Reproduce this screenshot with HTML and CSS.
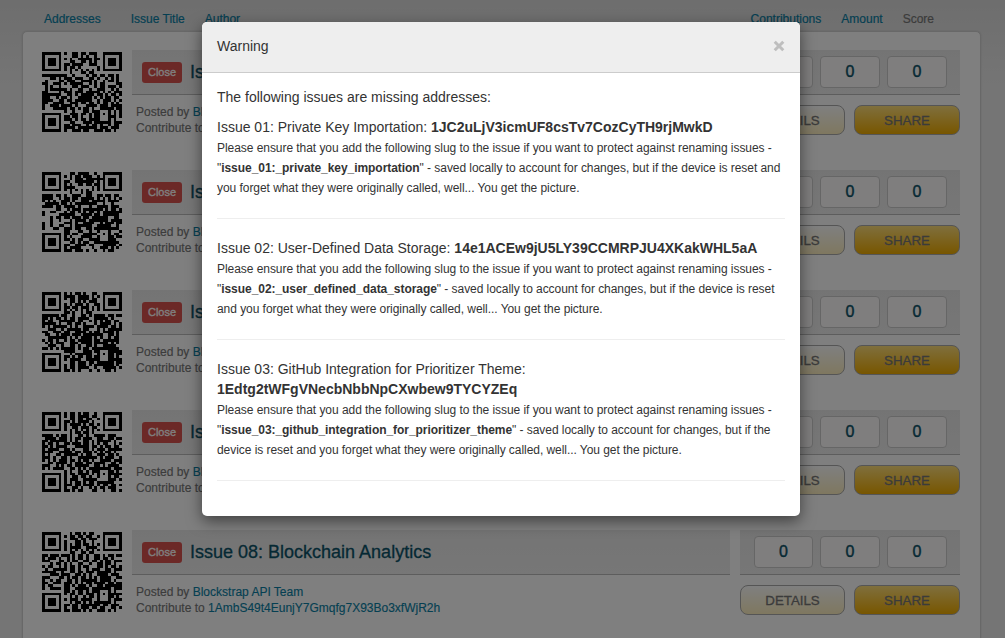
FILE: index.html
```html
<!DOCTYPE html>
<html lang="en">
<head>
<meta charset="utf-8">
<title>Issues</title>
<link rel="stylesheet" href="styles.css">
</head>
<body>
<div class="page">
  <nav class="sorts">
    <a class="s-addresses">Addresses</a><a class="s-title">Issue Title</a><a class="s-author">Author</a>
    <a class="s-contrib">Contributions</a><a class="s-amount">Amount</a><span class="s-score">Score</span>
  </nav>
  <main class="panel" id="issues"></main>
</div>
<div class="backdrop">
  <section class="modal">
    <header class="modal-head"><h4>Warning</h4>
      <svg class="x" viewBox="0 0 12 12"><path d="M1.7 1.7L10.3 10.3M10.3 1.7L1.7 10.3"/></svg>
    </header>
    <div class="modal-body">
      <p class="lead">The following issues are missing addresses:</p>
      <div class="missing">
        <p class="name">Issue 01: Private Key Importation: <b>1JC2uLjV3icmUF8csTv7CozCyTH9rjMwkD</b></p>
        <p class="note">Please ensure that you add the following slug to the issue if you want to protect against renaming issues -<br>"<b>issue_01:_private_key_importation</b>" - saved locally to account for changes, but if the device is reset and<br>you forget what they were originally called, well... You get the picture.</p>
      </div>
      <div class="missing">
        <p class="name">Issue 02: User-Defined Data Storage: <b>14e1ACEw9jU5LY39CCMRPJU4XKakWHL5aA</b></p>
        <p class="note">Please ensure that you add the following slug to the issue if you want to protect against renaming issues -<br>"<b>issue_02:_user_defined_data_storage</b>" - saved locally to account for changes, but if the device is reset<br>and you forget what they were originally called, well... You get the picture.</p>
      </div>
      <div class="missing">
        <p class="name">Issue 03: GitHub Integration for Prioritizer Theme:<br><b>1Edtg2tWFgVNecbNbbNpCXwbew9TYCYZEq</b></p>
        <p class="note">Please ensure that you add the following slug to the issue if you want to protect against renaming issues -<br>"<b>issue_03:_github_integration_for_prioritizer_theme</b>" - saved locally to account for changes, but if the<br>device is reset and you forget what they were originally called, well... You get the picture.</p>
      </div>
    </div>
  </section>
</div>
<script src="app.js"></script>
</body>
</html>
```
FILE: styles.css
```css
* { box-sizing: border-box; }
html, body { margin: 0; height: 638px; overflow: hidden; }
body { font: 14px/20px "Liberation Sans", Arial, sans-serif; color: #333; background: #ebebeb; }
p, h4 { margin: 0; font-weight: normal; }
.page { width: 1005px; height: 638px; overflow: hidden; background: linear-gradient(#dcdcdc, #ebebeb 90px); padding: 9px 24px 0 22px; }
.sorts { display: flex; height: 22px; font-size: 12px; color: #0a7fa5; padding-left: 22px; -webkit-text-stroke: .2px; }
.s-title { margin-left: 30px; }
.s-author { margin-left: 20px; }
.s-contrib { margin-left: auto; }
.s-amount { margin-left: 20px; }
.s-score { margin: 0 47px 0 20px; color: #777; }
.panel { height: 640px; background: #fff; border: 1px solid #d0d0d0; border-radius: 5px; box-shadow: 0 0 2px rgba(0,0,0,.12); padding: 18px 20px 0 19px; }
.issue { display: flex; height: 120px; }
.qr { width: 80px; height: 80px; margin: 2px 10px 0 0; flex: none; }
.main { width: 598px; }
.bar { height: 45px; background: linear-gradient(#e9e9e9, #eee); border-bottom: 1px solid #bbb; display: flex; align-items: center; }
.close { width: 40px; height: 21px; margin: 0 8px 0 10px; border-radius: 3px; background: #d9534f; color: #fff; font-size: 11px; line-height: 21px; text-align: center; -webkit-text-stroke: .3px; }
.title { font-size: 18px; color: #0b5268; white-space: nowrap; -webkit-text-stroke: .3px; }
.meta { padding: 9px 0 0 4px; font-size: 12px; line-height: 16px; color: #777; white-space: nowrap; -webkit-text-stroke: .15px; }
.meta a { color: #0a7fa5; }
.side { width: 220px; margin-left: 10px; }
.side .bar { padding-left: 14px; gap: 7px; }
.count { width: 60px; height: 32px; border: 1px solid #ccc; border-radius: 4px; background: #fffcfc; color: #0b5268; font-size: 16px; line-height: 30px; text-align: center; -webkit-text-stroke: .4px; }
.count:first-child { width: 59px; }
.buttons { display: flex; gap: 9px; padding-top: 10px; }
.btn { width: 105px; height: 30px; border: 1px solid #aaa; border-radius: 8px; color: #777; text-align: center; line-height: 29px; font-size: 13.3px; background: linear-gradient(#fff, #fff0c0); -webkit-text-stroke: .3px; }
.btn.share { width: 106px; background: linear-gradient(#ffdf7a, #f0ac00); }
.backdrop { position: absolute; left: 0; top: 0; width: 1005px; height: 638px; background: rgba(0,0,0,.5); padding: 22px 0 0 202px; }
.modal { width: 598px; height: 494px; background: #fff; border-radius: 5px; box-shadow: 0 5px 15px rgba(0,0,0,.5); overflow: hidden; }
.modal-head { height: 51px; background: #eee; border-bottom: 1px solid #ccc; padding: 0 15px 2px; display: flex; align-items: center; justify-content: space-between; }
.modal-head h4 { font-size: 14px; }
.x { width: 12px; height: 12px; }
.x path { stroke: #bebebe; stroke-width: 3; }
.modal-body { padding: 14px 15px 0; white-space: nowrap; }
.lead { padding-bottom: 10px; }
.missing { border-bottom: 1px solid #eee; padding-bottom: 20px; margin-bottom: 19px; }
.name { padding-bottom: 1px; }
.note { font-size: 12px; letter-spacing: -.052px; }
```
FILE: app.js
```js
// Data modules of each 29x29 code; finder and alignment marks are added when drawing.
const codes = [
`........#..##.##.###.........
...........##.#.#..#.........
........#.#..#####.##........
..........##..##.#.#.........
........##.####..###.........
........#.##.#......#........
........#.#.#.#.#.#.#........
..........#...##.##..........
#########..#....#.##.##.##.#.
...##.#.###.###..##.#..#.#.#.
.#....##.###..####.#..#.##.#.
##..###.#.#####..#.#.##....##
.#.#..#....##.###..#.##.###.#
.#.######.#..##..#..###..#.#.
##....#.###.###.#####.#.#.###
#######..##.#.#####.##.#.##.#
###..#.##.#..#####.#.#.##.##.
####..##.##.######..#.###.#.#
##..####..###.##.##.#.##.#.#.
#..###.####.#...####.###.####
#...#####.##.#.##.#..#####.##
........#..#...##.###...#.#.#
..........###.##.#.##...#.#.#
........##.##.#..#.##...###.#
........###.#.##.####...#.#..
..........##...###.######.###
........##.###..#.##.#..#.##.
........####.#######.###.###.
........#..###.##..###.##.#..`,
`..........##.####..#.........
........#.#.##.###..#........
..........#.###.######.......
........##..#######.#........
........#.#..##.##.##........
........####......#.#........
........#.#.#.#.#.#.#........
..........#...#.##...........
####.##.#..###..##..##.##.##.
####..#.##.##.#####.#.#.#.#.#
#.#.#..###.#..###.#####.####.
.#####.##.#.########..#..#...
####.##.####.#...#..####.###.
.....##..#.###.#######.#.##.#
#..##...#.##.#.#.##.#.#######
#.....######..####.##.######.
...#.##.##.###.##.######..##.
...#..#...#.####.#######.####
#..#....###.#..####..#.###.##
#..#..##..#.######..#####..#.
#...##..###.##..##.#########.
........##...##..#..#...#...#
........##.##..#####....#.##.
........#.#...####..#...##.##
........##.#.##..####...###..
..........##.#.##..#########.
........##..####.##...#####.#
........#.####....#..###.#.#.
........###.###.#..#..#.##...`,
`........#.#.##.#..##.........
........####.####.#.#........
........#.##.####.##.........
..........##.#.#.###.........
........#.#.###.#..##........
........##.##.###.#.#........
........#.#.#.#.#.#.#........
........##.#..#.##...........
######.##..#..##.#.####.##.##
##.#.##.#.##.####..#####.#...
#.##..######.##..#.#.#.##.##.
#####.#..##.##.#...#.####.#.#
#.#.#####.#.#..####.####.##.#
..###..#.#####.##...#.#.#####
##..###.##..####.#.##.####.#.
.##..#.###.###.#######..##.#.
..#######.#.#.####.#.#..#.##.
#.##.#..#.##.#####.##.######.
.#.#.###..###.####.#####.#.#.
..###..#..##.#..##.#..#####..
##.#.#.#####.#.##.##########.
........####...###.##...#####
..........#.######..#...##.##
........##.#.##.##.##...##.#.
........#.####..#####...#####
..........##.###.##.######.##
........#.##.###.#.#######.#.
........#.##.####..#..#####.#
........##.#.#...#..#..##.#..`,
`........#.##.#.##..#.........
........#.##.####.##.........
..........##.##.##..#........
........##.#.####.#..........
........#.####.#.##.#........
........#..##.###.##.........
........#.#.#.#.#.#.#........
..........#.##.##.#..........
####.#.##.#..##.#..####.###..
.####.###.#.##.###..##..##.##
##.######.#.#..##.#.#####.#..
#.##.#..##.###.##.#.#.##..#.#
##.#.####...#####.##.#.##.##.
#.####..##.#...##.#.###.#####
####..#####.##.###.#.#.##.#..
#.#..##.#####.#.##..###.##.#.
###.#..##.#..#######.#.###..#
#.#.#.###.##.#.##.#..####.###
..##.####.#.###.##.####..##.#
###..#.#.##.#####..##.#.####.
#.#.####..##.#.#.########.###
........#.#..##.#.###...##.#.
........#.##.####.#.#...#####
........#..##.##.#..#...#.##.
........#.###..#####....###.#
........#.#.##.#.##.######...
........###.##.####.#.##.##.#
........#..##.#..#.#.##.###..
........##.#.##...##..#..##.#`,
`..........#.##.#.##..........
........#.##.##.##..#........
..........###.##.###.........
........#...##.#..#..........
........#.#.##.##.#.#........
........#.####..####.........
........#.#.#.#.#.#.#........
..........##..##.##..........
##.###.###.#.##.#..##.#.##.##
#.###.#..#.#.##.#..##.##.#...
###...##.#.##..##.##.#.##.###
...#.##.#.#..##..#..##.##.#..
#.##..#.#.##.#.##...##.#.##.#
.#..#####.##.#..#.###..##.###
#####..#..##.##.###.#####.#..
...###.###..##.#.#..####.###.
###...##.#.##.##.#.#.####..##
#..#.##..##.#.######.####.#..
##..###.###.#.#.##.####.##.##
#.##....##.#.###.#..##.######
#..####.##..#####.#######.###
........##.#.##.#.###...#.#..
........#.##.##.###.#...#####
..........#.#..#.##.#...##.#.
........#.###.####..#...#.###
..........#.##.#.#.######.#..
........##.##.#######.##.###.
........#..##.###.##.##..##.#
........##.###.#.#..###.#.#..`];

function finder(x, y) {
  return `M${x} ${y}h7v7h-7zM${x + 1} ${y + 1}v5h5v-5zM${x + 2} ${y + 2}h3v3h-3z`;
}

function qr(rows) {
  let d = finder(0, 0) + finder(22, 0) + finder(0, 22);
  rows.split('\n').forEach((row, y) => {
    for (const run of row.matchAll(/#+/g)) {
      const width = run[0].length;
      d += `M${run.index} ${y}h${width}v1h-${width}z`;
    }
  });
  d += 'M22 22h1v1h-1z';
  return `<svg class="qr" viewBox="0 0 29 29" shape-rendering="crispEdges"><path d="${d}"/></svg>`;
}

document.getElementById('issues').innerHTML = codes.map((rows, i) => {
  const last = i === codes.length - 1;
  return `<article class="issue">${qr(rows)}
    <div class="main">
      <div class="bar"><span class="close">Close</span><span class="title">${last ? 'Issue 08: Blockchain Analytics' : 'Issue'}</span></div>
      <div class="meta">Posted by <a>Blockstrap API Team</a><br>Contribute to ${last ? '<a>1AmbS49t4EunjY7Gmqfg7X93Bo3xfWjR2h</a>' : ''}</div>
    </div>
    <div class="side">
      <div class="bar"><span class="count">0</span><span class="count">0</span><span class="count">0</span></div>
      <div class="buttons"><span class="btn">DETAILS</span><span class="btn share">SHARE</span></div>
    </div>
  </article>`;
}).join('');
```
